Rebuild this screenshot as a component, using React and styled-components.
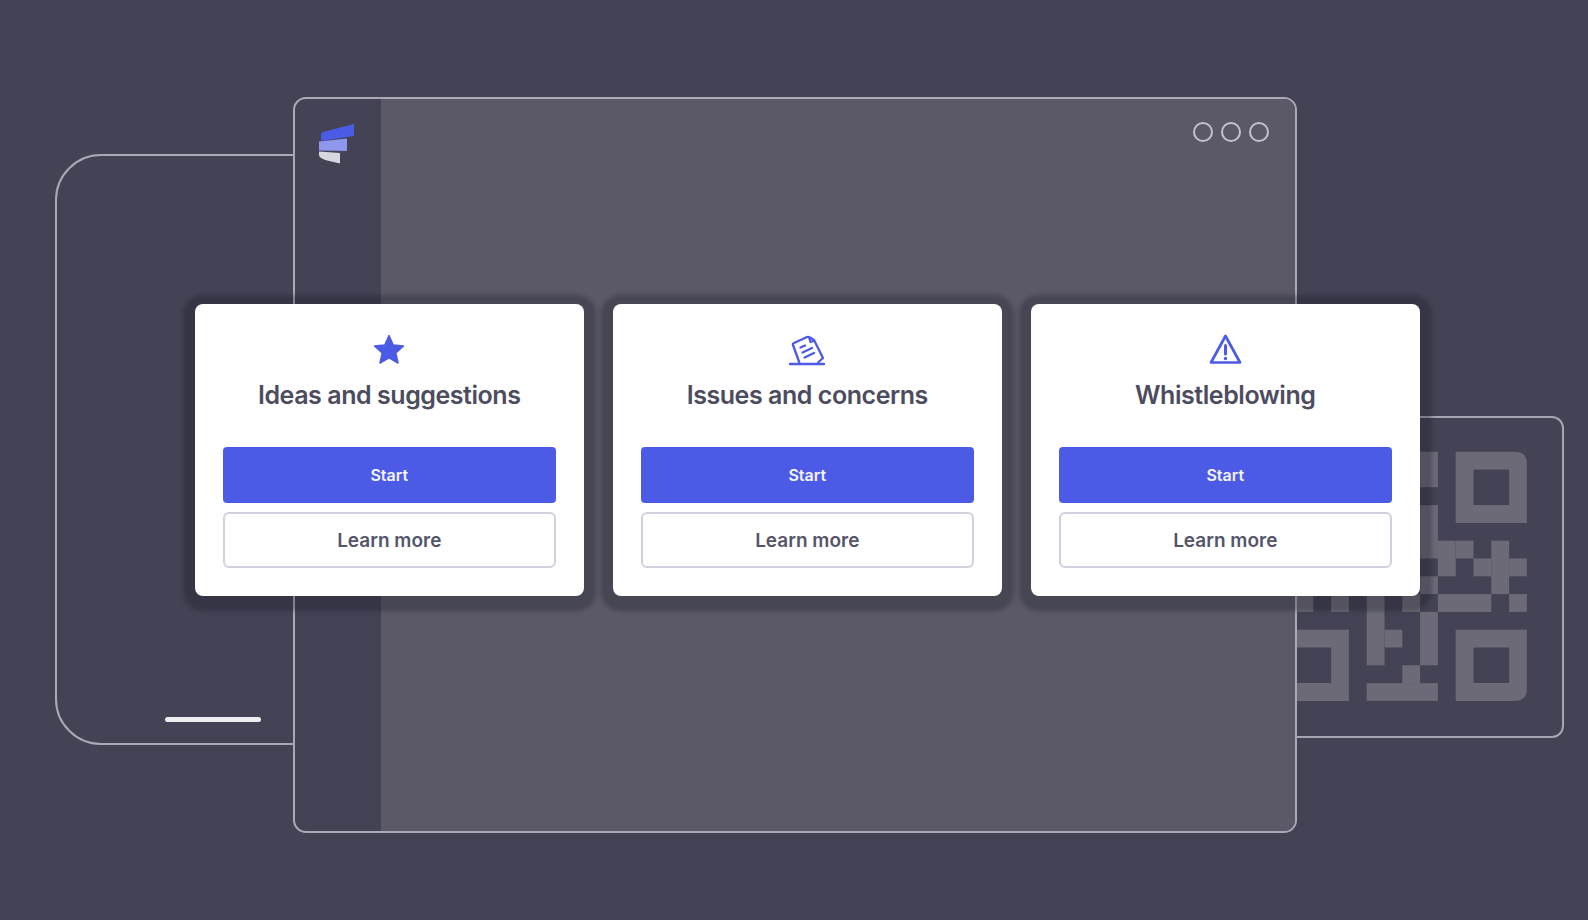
import React from "react";
import styled, { createGlobalStyle } from "styled-components";

const Global = createGlobalStyle`
  html, body { margin: 0; padding: 0; background: #444356; }
  * { box-sizing: border-box; }
`;

const Stage = styled.main`
  position: relative;
  width: 1588px;
  height: 920px;
  overflow: hidden;
  background: #444356;
  font-family: Inter, "Liberation Sans", sans-serif;
`;

const PhoneFrame = styled.div`
  position: absolute;
  left: 55px;
  top: 154px;
  width: 315px;
  height: 591px;
  border: 2px solid #aaa9b4;
  border-radius: 46px;
  display: flex;
  align-items: flex-end;
  justify-content: center;
  padding-bottom: 21px;
`;

const HomeBar = styled.div`
  width: 96px;
  height: 5px;
  border-radius: 3px;
  background: #eeeef2;
`;

const QrCard = styled.div`
  position: absolute;
  left: 1200px;
  top: 416px;
  width: 364px;
  height: 322px;
  border: 2px solid #a6a5b0;
  border-radius: 12px;
`;

const QrArt = styled.svg`
  position: absolute;
  left: -2px;
  top: -2px;
  width: 364px;
  height: 322px;
`;

const BrowserWindow = styled.section`
  position: absolute;
  left: 293px;
  top: 97px;
  width: 1004px;
  height: 736px;
  border: 2px solid #aaa9b4;
  border-radius: 13px;
  background: #444356;
  display: flex;
  overflow: hidden;
`;

const Sidebar = styled.aside`
  flex: 0 0 86px;
  padding: 24px 0 0 23px;
`;

const Panel = styled.div`
  flex: 1;
  background: #5b5968;
  display: flex;
  justify-content: flex-end;
  align-items: flex-start;
  padding: 23px 26px 0 0;
  gap: 8px;
`;

const Dot = styled.span`
  width: 20px;
  height: 20px;
  border: 2px solid #c4c3cc;
  border-radius: 50%;
`;

const CardRow = styled.div`
  position: absolute;
  left: 195px;
  top: 304px;
  display: flex;
  gap: 29px;
`;

const Card = styled.article`
  width: 389px;
  height: 292px;
  padding: 28px 28px 28px 27.5px;
  background: #ffffff;
  border-radius: 8px;
  box-shadow: 0 3px 4px 12px rgba(20, 20, 30, 0.27);
  display: flex;
  flex-direction: column;
  align-items: center;
`;

const IconSlot = styled.div`
  height: 35px;
  display: flex;
  align-items: center;
  justify-content: center;
  color: #4b5be6;
`;

const Title = styled.h2`
  margin: 10px 0 0;
  height: 36px;
  line-height: 36px;
  font-size: 25px;
  font-weight: 600;
  letter-spacing: -0.45px;
  color: #4c4c5f;
  white-space: nowrap;
`;

const Actions = styled.div`
  margin-top: auto;
  width: 100%;
  display: flex;
  flex-direction: column;
  gap: 9px;
`;

const ActionButton = styled.button`
  width: 100%;
  height: 56px;
  font-family: inherit;
  font-weight: 600;
  border-radius: ${(p) => (p.$primary ? "4px" : "6px")};
  font-size: ${(p) => (p.$primary ? "16px" : "19px")};
  color: ${(p) => (p.$primary ? "#f4f5ff" : "#55556a")};
  background: ${(p) => (p.$primary ? "#4b5be6" : "#ffffff")};
  border: ${(p) => (p.$primary ? "none" : "2px solid #cfd1de")};
`;

const Logo = () => (
  <svg width="38" height="42" viewBox="0 0 38 42" aria-hidden="true">
    <path d="M3 11.5Q3 9.5 5 9L36 1V13L3 18Z" fill="#4b5be6" />
    <path d="M1 18.5L29 15.5V28L1 27.5Z" fill="#8e97ee" />
    <path d="M1 28.5L22 30V40.5L9 37.5Q1 35 1 32Z" fill="#d7d7df" />
  </svg>
);

const StarIcon = () => (
  <svg width="32" height="31" viewBox="0 0 32 31" aria-hidden="true">
    <path
      d="M16 1.5L20.2 11L30.5 12L22.8 18.9L25 29L16 23.8L7 29L9.2 18.9L1.5 12L11.8 11Z"
      fill="currentColor"
      stroke="currentColor"
      strokeWidth="1.5"
      strokeLinejoin="round"
    />
  </svg>
);

const BallotIcon = () => (
  <svg width="36" height="33" viewBox="0 0 36 33" fill="none" stroke="currentColor" strokeWidth="2.3" aria-hidden="true">
    <path d="M10.5 30L4 12Q3.5 10.5 5 10L18 4Q19.5 3.5 21 4.5L25 7L34 25L28.5 30" strokeLinejoin="round" />
    <path d="M20 4L21.5 9L26 7.5" strokeLinejoin="round" />
    <path d="M11.5 14.5L16 12.5M13.5 19.5L23 15M15.5 24.5L25 20" strokeLinecap="round" />
    <path d="M1 31H35" strokeLinecap="round" />
  </svg>
);

const WarningIcon = () => (
  <svg width="33" height="32" viewBox="0 0 33 32" fill="none" aria-hidden="true">
    <path
      d="M16.5 2L31 28.5H2Z"
      stroke="currentColor"
      strokeWidth="2.7"
      strokeLinejoin="round"
    />
    <path d="M16.5 11.5V20" stroke="currentColor" strokeWidth="3" strokeLinecap="round" />
    <circle cx="16.5" cy="24.5" r="1.7" fill="currentColor" />
  </svg>
);

/* column/row cells of the QR code, col 0 being the left edge of the top-right finder */
const U = 17.8;
const OX = 255.7;
const OY = 35.7;
const qrCells = [
  [-2, 0, 1, 2], [-2, 3, 1, 3], [-2, 7, 1, 1],
  [-1, 5, 1, 2], [0, 5, 1, 1], [1, 6, 1, 1], [2, 5, 1, 3], [3, 6, 1, 1],
  [-1, 8, 3, 1], [3, 8, 1, 1],
  [-9, 8, 1, 1], [-7, 8, 1, 1], [-5, 8, 1, 1], [-3, 8, 1, 1],
  [-2, 9, 1, 3], [-5, 9, 1, 3], [-4, 10, 1, 1], [-3, 12, 1, 1], [-5, 13, 4, 1],
];

const Finder = ({ col, row, corner }) => {
  const x = OX + col * U;
  const y = OY + row * U;
  const s = U * 4;
  const r = 12;
  let outer = `M${x} ${y}H${x + s}V${y + s}H${x}Z`;
  if (corner === "tr") outer = `M${x} ${y}H${x + s - r}Q${x + s} ${y} ${x + s} ${y + r}V${y + s}H${x}Z`;
  if (corner === "br") outer = `M${x} ${y}H${x + s}V${y + s - r}Q${x + s} ${y + s} ${x + s - r} ${y + s}H${x}Z`;
  const hole = `M${x + U} ${y + U}V${y + 3 * U}H${x + 3 * U}V${y + U}Z`;
  return <path d={outer + hole} fill="#6b6a76" />;
};

const QrCode = () => (
  <QrArt viewBox="0 0 364 322" aria-hidden="true">
    <Finder col={0} row={0} corner="tr" />
    <Finder col={0} row={10} corner="br" />
    <Finder col={-10} row={10} />
    {qrCells.map(([c, r, w, h]) => (
      <rect key={`${c}-${r}`} x={OX + c * U} y={OY + r * U} width={w * U} height={h * U} fill="#6b6a76" />
    ))}
  </QrArt>
);

const cards = [
  { title: "Ideas and suggestions", icon: <StarIcon /> },
  { title: "Issues and concerns", icon: <BallotIcon /> },
  { title: "Whistleblowing", icon: <WarningIcon /> },
];

export default function App() {
  return (
    <>
      <Global />
      <Stage>
        <PhoneFrame>
          <HomeBar />
        </PhoneFrame>
        <QrCard>
          <QrCode />
        </QrCard>
        <BrowserWindow>
          <Sidebar>
            <Logo />
          </Sidebar>
          <Panel>
            <Dot />
            <Dot />
            <Dot />
          </Panel>
        </BrowserWindow>
        <CardRow>
          {cards.map((c) => (
            <Card key={c.title}>
              <IconSlot>{c.icon}</IconSlot>
              <Title>{c.title}</Title>
              <Actions>
                <ActionButton $primary>Start</ActionButton>
                <ActionButton>Learn more</ActionButton>
              </Actions>
            </Card>
          ))}
        </CardRow>
      </Stage>
    </>
  );
}
